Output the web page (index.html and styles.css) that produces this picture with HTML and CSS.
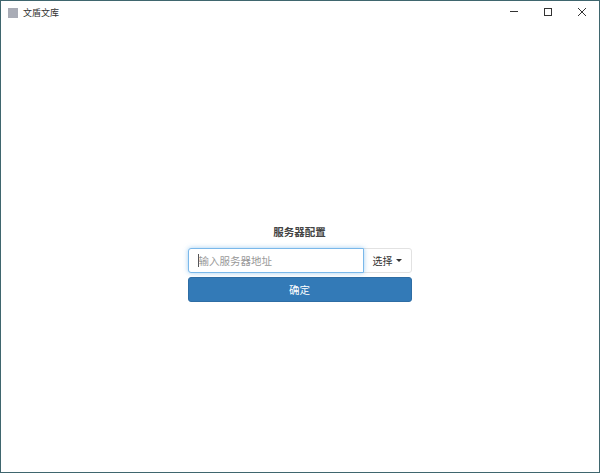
FILE: index.html
```html
<!DOCTYPE html>
<html lang="zh-CN">
<head>
<meta charset="utf-8">
<title>文盾文库</title>
<link rel="stylesheet" href="styles.css">
</head>
<body>
<div class="window">
  <header class="titlebar">
    <div class="title">
      <span class="app-icon"></span>
      <span class="title-text">文盾文库</span>
    </div>
    <div class="controls">
      <svg class="control" width="34" height="23" viewBox="0 0 34 23"><path d="M14 10.500h8" stroke="#333" fill="none"/></svg>
      <svg class="control" width="34" height="23" viewBox="0 0 34 23"><rect x="14.500" y="7.500" width="7" height="7" stroke="#333" fill="none"/></svg>
      <svg class="control" width="34" height="23" viewBox="0 0 34 23"><path d="M14 7l8 8M22 7l-8 8" stroke="#333" fill="none"/></svg>
    </div>
  </header>
  <main class="content">
    <form class="config">
      <h1 class="heading">服务器配置</h1>
      <div class="input-group">
        <div class="input"><span class="caret"></span><span class="placeholder">输入服务器地址</span></div>
        <button type="button" class="select">选择<span class="arrow"></span></button>
      </div>
      <button type="button" class="confirm">确定</button>
    </form>
  </main>
</div>
</body>
</html>
```
FILE: styles.css
```css
* { box-sizing: border-box; }
html, body { margin: 0; height: 100%; }
body {
  font-family: "Noto Sans CJK SC", "Liberation Sans", sans-serif;
  background: #fff;
  color: #333;
}
.window {
  width: 600px;
  height: 473px;
  display: flex;
  flex-direction: column;
  border: 1px solid #3f666e;
  background: #fff;
}
.titlebar {
  height: 23px;
  display: flex;
  justify-content: space-between;
  flex: none;
}
.title { display: flex; align-items: center; padding-left: 7px; gap: 5px; }
.app-icon { width: 10px; height: 10px; background: #a9acb6; }
.title-text { font-size: 9px; color: #333; line-height: 14px; }
.controls { display: flex; padding-right: 1px; }
.control { display: block; }
.content {
  flex: 1;
  display: flex;
  justify-content: center;
  padding-top: 201px;
  padding-right: 1px;
}
.config { width: 224px; display: flex; flex-direction: column; }
.heading {
  margin: -1px 0 8px;
  font-size: 10.5px;
  line-height: 16px;
  font-weight: 700;
  text-align: center;
  color: #444;
}
.input-group { display: flex; height: 25px; }
.input {
  width: 176px;
  display: flex;
  align-items: center;
  padding-left: 9px;
  border: 1px solid #7ab8ea;
  border-radius: 3px 0 0 3px;
  box-shadow: 0 0 5px rgba(102, 175, 233, .6);
  position: relative;
  z-index: 1;
  background: #fff;
}
.caret { width: 1px; height: 13px; background: #555; }
.placeholder { font-size: 10.5px; color: #999; line-height: 16px; }
.select {
  flex: 1;
  padding: 0;
  margin-left: -1px;
  border: 1px solid #e2e2e2;
  border-radius: 0 3px 3px 0;
  background: #fff;
  color: #333;
  font: inherit;
  font-size: 10px;
  display: flex;
  align-items: center;
  justify-content: center;
  gap: 3px;
}
.arrow {
  width: 0;
  height: 0;
  border-top: 3px solid #333;
  border-left: 3px solid transparent;
  border-right: 3px solid transparent;
}
.confirm {
  height: 25px;
  margin-top: 4px;
  border: 1px solid #2e6da4;
  border-radius: 3px;
  background: #337ab7;
  color: #fff;
  font: inherit;
  font-size: 10.5px;
  padding: 0;
}
```
